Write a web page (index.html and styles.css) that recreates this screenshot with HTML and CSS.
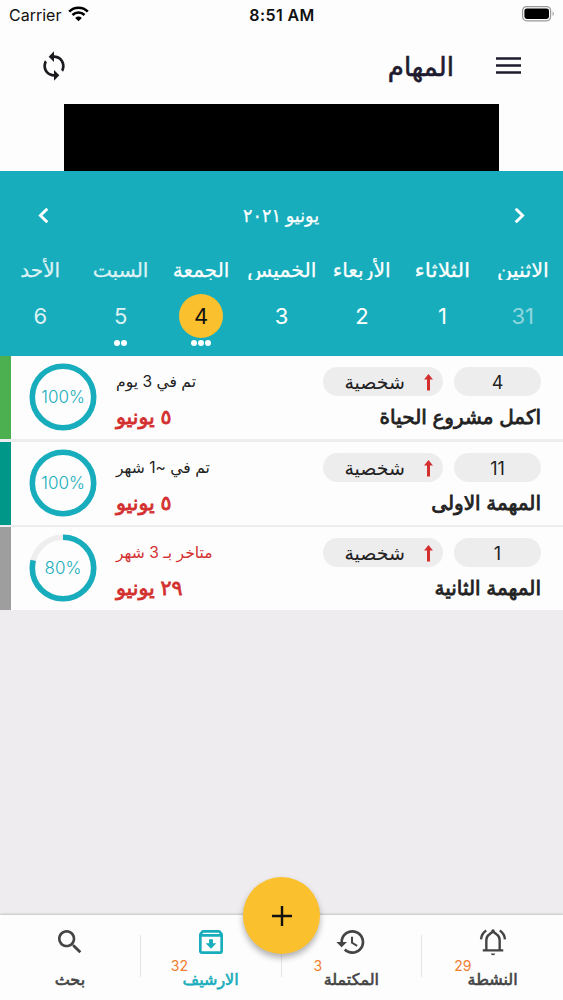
FILE: index.html
```html
<!DOCTYPE html>
<html lang="ar" dir="rtl">
<head>
<meta charset="utf-8">
<title>المهام</title>
<link rel="stylesheet" href="styles.css">
</head>
<body>
<div class="app">
  <div class="status" dir="ltr">
    <div class="carrier"><span>Carrier</span>
      <svg width="21" height="16" viewBox="0 0 21 16"><g fill="none" stroke="#000" stroke-width="2.7"><path d="M1.2 5.6a13.2 13.2 0 0 1 18.6 0"/><path d="M4.5 9a8.5 8.5 0 0 1 12 0"/></g><path d="M10.5 15.2 7.2 11.9a4.7 4.7 0 0 1 6.6 0z"/></svg>
    </div>
    <div class="clock">8:51 AM</div>
    <svg class="battery" width="33" height="16" viewBox="0 0 33 16"><rect x=".6" y=".6" width="28" height="14.2" rx="4" fill="none" stroke="#999" stroke-width="1.2"/><rect x="2.4" y="2.4" width="24.6" height="10.6" rx="2.4"/><path d="M30.6 5.2q2.4 2.4 0 5z" fill="#999"/></svg>
  </div>
  <header class="header">
    <svg width="25" height="18" viewBox="0 0 25 18"><path d="M0 1.5h25M0 8.5h25M0 15.5h25" stroke="#1f1b2e" stroke-width="2.4"/></svg>
    <h1 class="title">المهام</h1>
    <svg width="32" height="32" viewBox="0 0 24 24" fill="#1d1b20"><path d="M12 4V1L8 5l4 4V6c3.31 0 6 2.69 6 6 0 1.01-.25 1.97-.7 2.8l1.46 1.46C19.54 15.03 20 13.57 20 12c0-4.42-3.58-8-8-8zm0 14c-3.31 0-6-2.69-6-6 0-1.01.25-1.97.7-2.8L5.24 7.74C4.46 8.97 4 10.43 4 12c0 4.42 3.58 8 8 8v3l4-4-4-4v3z"/></svg>
  </header>
  <div class="banner"></div>
  <section class="calendar">
    <div class="month">
      <svg width="11" height="17" viewBox="0 0 11 17"><path d="M1.7 1.7 8.6 8.5 1.7 15.3" fill="none" stroke="#fff" stroke-width="2.9"/></svg>
      <span class="month-name">يونيو ٢٠٢١</span>
      <svg width="11" height="17" viewBox="0 0 11 17"><path d="M9.3 1.7 2.4 8.5 9.3 15.3" fill="none" stroke="#fff" stroke-width="2.9"/></svg>
    </div>
    <div class="days">
      <div class="day out"><div class="name mon">الاثنين</div><div class="num">31</div></div>
      <div class="day"><div class="name tue">الثلاثاء</div><div class="num">1</div></div>
      <div class="day"><div class="name wed">الأربعاء</div><div class="num">2</div></div>
      <div class="day"><div class="name thu">الخميس</div><div class="num">3</div></div>
      <div class="day selected"><div class="name">الجمعة</div><div class="num">4</div><div class="dots"><i></i><i></i><i></i></div></div>
      <div class="day weekend"><div class="name sat">السبت</div><div class="num">5</div><div class="dots"><i></i><i></i></div></div>
      <div class="day weekend"><div class="name">الأحد</div><div class="num">6</div></div>
    </div>
  </section>
  <main class="tasks">
    <article class="task green">
      <div class="info">
        <div class="tags"><span class="tag id">4</span><span class="tag cat"><svg width="9" height="17" viewBox="0 0 9 17"><path d="M4.5 0 9 5.5H6v11H3v-11H0z" fill="#d32f2f"/></svg><span>شخصية</span></span></div>
        <div class="task-name">اكمل مشروع الحياة</div>
      </div>
      <div class="when"><div class="state">تم في 3 يوم</div><div class="date">٥ يونيو</div></div>
      <div class="ring"><svg width="68" height="68" viewBox="0 0 68 68"><circle cx="34" cy="34" r="30.7"/></svg><span>100%</span></div>
    </article>
    <article class="task teal">
      <div class="info">
        <div class="tags"><span class="tag id">11</span><span class="tag cat"><svg width="9" height="17" viewBox="0 0 9 17"><path d="M4.5 0 9 5.5H6v11H3v-11H0z" fill="#d32f2f"/></svg><span>شخصية</span></span></div>
        <div class="task-name">المهمة الاولى</div>
      </div>
      <div class="when"><div class="state">تم في ~1 شهر</div><div class="date">٥ يونيو</div></div>
      <div class="ring"><svg width="68" height="68" viewBox="0 0 68 68"><circle cx="34" cy="34" r="30.7"/></svg><span>100%</span></div>
    </article>
    <article class="task gray">
      <div class="info">
        <div class="tags"><span class="tag id">1</span><span class="tag cat"><svg width="9" height="17" viewBox="0 0 9 17"><path d="M4.5 0 9 5.5H6v11H3v-11H0z" fill="#d32f2f"/></svg><span>شخصية</span></span></div>
        <div class="task-name">المهمة الثانية</div>
      </div>
      <div class="when"><div class="state late">متاخر بـ 3 شهر</div><div class="date">٢٩ يونيو</div></div>
      <div class="ring"><svg width="68" height="68" viewBox="0 0 68 68"><circle class="track" cx="34" cy="34" r="30.7"/><circle cx="34" cy="34" r="30.7" pathLength="100" stroke-dasharray="79 100" transform="rotate(-90 34 34)"/></svg><span>80%</span></div>
    </article>
  </main>
  <nav class="nav">
    <a class="item"><svg width="32" height="32" viewBox="0 0 24 24"><path d="M10.4 20.6h3.2q-.4 1.4-1.6 1.4t-1.6-1.4z"/><path d="M7 17.8v-7.3q0-2.8 2.4-4.3L12 4.1l2.600 2.100Q17 7.700 17 10.500v7.300M4.300 18.300h15.400" fill="none" stroke="#444" stroke-width="1.800"/><circle cx="12" cy="3.700" r="1.300"/><path d="M6.900 3.300Q3.400 5.600 3 10M17.100 3.300Q20.600 5.600 21 10" fill="none" stroke="#444" stroke-width="1.800"/></svg><span class="label">النشطة</span><span class="count count-active">29</span></a>
    <a class="item"><svg width="32" height="32" viewBox="0 0 24 24"><path d="M13 3c-4.97 0-9 4.03-9 9H1l3.89 3.89.07.14L9 12H6c0-3.87 3.13-7 7-7s7 3.13 7 7-3.13 7-7 7c-1.93 0-3.68-.79-4.94-2.06l-1.42 1.42C8.27 19.99 10.51 21 13 21c4.97 0 9-4.03 9-9s-4.03-9-9-9zm-1 5v5l4.28 2.54.72-1.21-3.5-2.08V8H12z"/></svg><span class="label">المكتملة</span><span class="count count-done">3</span></a>
    <a class="item active"><svg width="32" height="32" viewBox="0 0 24 24"><path d="M20.54 5.23l-1.39-1.68C18.88 3.21 18.47 3 18 3H6c-.47 0-.88.21-1.16.55L3.46 5.23C3.17 5.57 3 6.02 3 6.5V19c0 1.1.9 2 2 2h14c1.1 0 2-.9 2-2V6.5c0-.48-.17-.93-.46-1.27zM6.24 5h11.52l.83 1H5.42l.82-1zM5 19V8h14v11H5zm8.45-9h-2.9v3H8l4 4 4-4h-2.55z"/></svg><span class="label">الارشيف</span><span class="count count-archive">32</span></a>
    <a class="item"><svg width="32" height="32" viewBox="0 0 24 24"><path d="M15.5 14h-.79l-.28-.27C15.41 12.59 16 11.11 16 9.5 16 5.91 13.09 3 9.5 3S3 5.91 3 9.5 5.91 16 9.5 16c1.61 0 3.09-.59 4.23-1.57l.27.28v.79l5 4.99L20.49 19l-4.99-5zm-6 0C7.01 14 5 11.99 5 9.5S7.01 5 9.5 5 14 7.01 14 9.5 11.99 14 9.5 14z"/></svg><span class="label">بحث</span></a>
    <button class="fab"><svg width="20" height="20" viewBox="0 0 20 20"><path d="M10 0v20M0 10h20" stroke="#111" stroke-width="2.4"/></svg></button>
  </nav>
</div>
</body>
</html>
```
FILE: styles.css
```css
* { box-sizing: border-box; }
body { margin: 0; background: #eeecee; font-family: Inter, "DejaVu Sans", sans-serif; color: #222; }
svg { display: block; }
.app { width: 563px; height: 1000px; display: flex; flex-direction: column; overflow: hidden; }
.status { display: grid; grid-template-columns: 1fr auto 1fr; align-items: center; height: 29px; padding: 0 8px 0 9px; background: #fdfdfd; color: #111; }
.carrier { display: flex; gap: 7px; align-items: center; font-size: 16px; }
.carrier svg { margin-bottom: 2px; }
.clock { font-size: 16px; font-weight: 600; letter-spacing: .4px; }
.battery { justify-self: end; margin-bottom: 1px; }
.header { display: flex; align-items: center; height: 75px; padding: 0 42px 0 38px; background: #fdfdfd; }
.header svg { margin-bottom: 2px; }
.title { margin: 0; font-size: 26px; font-weight: 400; flex: 1; padding-right: 42px; color: #1f1b2e; -webkit-text-stroke: .6px; }
.banner { height: 67px; background: #000; border: solid #fdfdfd; border-width: 0 64px; }
.calendar { height: 185px; background: #18adbc; color: #fff; padding-top: 29px; }
.month { display: flex; justify-content: space-between; align-items: center; height: 30px; padding: 0 38px; font-size: 19px; }
.month-name { transform: scaleX(.925); -webkit-text-stroke: .25px; }
.days { display: grid; grid-template-columns: repeat(7, 1fr); padding-top: 24px; }
.day { display: flex; flex-direction: column; align-items: center; }
.name { height: 26px; line-height: 33px; font-size: 20px; overflow: hidden; white-space: nowrap; -webkit-text-stroke: .25px; }
.mon { transform: scaleX(1.04); }
.tue { transform: scaleX(1.1); }
.wed { transform: scaleX(1.01); }
.thu { transform: scaleX(1.02); }
.sat { transform: scaleX(1.01); }
.num { width: 44px; height: 44px; margin-top: 14px; border-radius: 50%; line-height: 44px; text-align: center; font-size: 22px; }
.selected .num { background: #fbc02d; color: #111; }
.dots { display: flex; gap: 1px; margin-top: 2px; }
.dots i { width: 6px; height: 6px; border-radius: 50%; background: #fff; }
.out .num { opacity: .5; }
.weekend .name, .weekend .num { opacity: .85; }
.tasks { flex: 1; }
.task { display: flex; height: 83px; margin-bottom: 2.5px; padding-right: 22px; border-left: 11px solid; background: #fdfdfd; }
.green { border-left-color: #4caf50; }
.teal { border-left-color: #009688; }
.gray { border-left-color: #9e9e9e; }
.info { flex: 1; padding-top: 11px; }
.tags { display: flex; gap: 11px; }
.tag { display: flex; align-items: center; height: 29px; padding-top: 2px; border-radius: 15px; background: #eeedee; font-size: 19px; }
.id { width: 87px; justify-content: center; font-size: 18px; }
.cat { width: 120px; padding-right: 10px; gap: 19px; }
.task-name { font-size: 20px; line-height: 42px; white-space: nowrap; -webkit-text-stroke: .8px; }
.when { width: 130px; display: flex; flex-direction: column; align-items: flex-end; padding-top: 12px; white-space: nowrap; }
.state { font-size: 15.6px; line-height: 28px; }
.late, .date { color: #d32f2f; }
.date { font-size: 20.5px; line-height: 42px; -webkit-text-stroke: .8px; }
.ring { display: grid; place-items: center; width: 68px; height: 68px; margin: 7px 19px 0 18px; color: #18adbc; font-size: 17px; font-weight: 300; }
.ring > * { grid-area: 1 / 1; }
.ring circle { fill: none; stroke: #18adbc; stroke-width: 5.6; }
.ring .track { stroke: #eee; }
.nav { position: relative; display: grid; grid-template-columns: repeat(4, 1fr); height: 85px; background: #fdfdfd; box-shadow: 0 -1px 2px rgba(0, 0, 0, .18); }
.item { position: relative; display: flex; flex-direction: column; align-items: center; padding-top: 11px; color: #444; font-size: 16px; fill: #444; }
.item + .item { border-right: 1px solid; border-image: linear-gradient(transparent 21px, #e6e4e8 21px, #e6e4e8 62px, transparent 62px) 1; }
.label { line-height: 24px; margin-top: 9px; -webkit-text-stroke: .6px; }
.active { color: #18adbc; fill: #18adbc; }
.count { position: absolute; top: 42px; font-size: 14px; color: #f08030; }
.count-active { left: 32px; }
.count-done { left: 32px; }
.count-archive { left: 30px; }
.fab { position: absolute; left: 243px; top: -38px; width: 77px; height: 77px; padding: 0; border: 0; border-radius: 50%; background: #fbc02d; display: grid; place-items: center; box-shadow: 0 4px 6px rgba(0, 0, 0, .3); }
```
